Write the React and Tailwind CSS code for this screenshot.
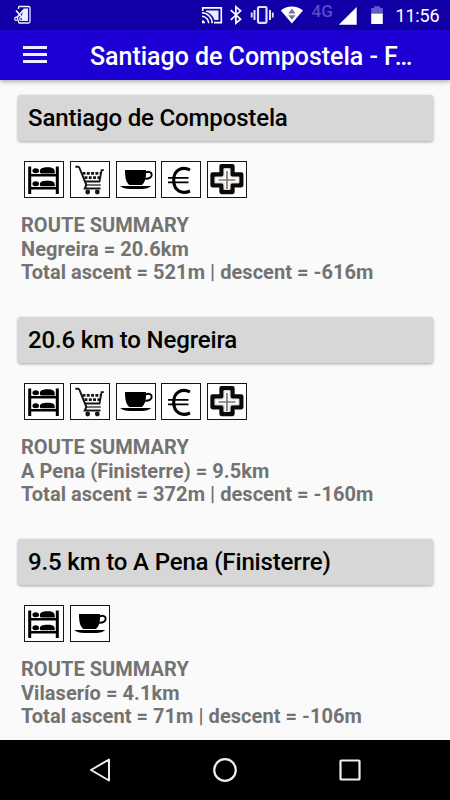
const STAGES = [
  {
    title: "Santiago de Compostela",
    services: ["bed", "shop", "cafe", "bank", "pharmacy"],
    next: "Negreira = 20.6km",
    totals: "Total ascent = 521m | descent = -616m",
  },
  {
    title: "20.6 km to Negreira",
    services: ["bed", "shop", "cafe", "bank", "pharmacy"],
    next: "A Pena (Finisterre) = 9.5km",
    totals: "Total ascent = 372m | descent = -160m",
  },
  {
    title: "9.5 km to A Pena (Finisterre)",
    services: ["bed", "cafe"],
    next: "Vilaserío = 4.1km",
    totals: "Total ascent = 71m | descent = -106m",
  },
];

// Service pictograms, all drawn in a 40x37 box
const ICONS = {
  bed: (
    <g fill="#000">
      <path d="M4.2 5.5h3V33h-3zM31.8 5.5h3V33h-3zM6 13h28v2.5H6zM6 26h28v2.6H6z" />
      <ellipse cx="11.700" cy="9.800" rx="3.300" ry="2.500" />
      <ellipse cx="11.700" cy="22.800" rx="3.300" ry="2.500" />
      <path d="M15.800 10.500c0-2.700 1.500-3.800 4.500-4.100 2.500-.3 5.500-.3 7.500.3 2.500.6 3 2.300 3 5.800h-13.500c-1 0-1.500-.7-1.500-2zM15.800 23.500c0-2.500 1.500-3.300 4.500-3.600 2.500-.3 5.500-.3 7.500.3 2.500.6 3 1.800 3 5.100h-13.500c-1 0-1.500-.7-1.500-1.800z" />
    </g>
  ),
  shop: (
    <g fill="none" stroke="#161616" strokeWidth="1.800">
      <path d="M5.300 5.700h2.500q1.200 0 1.700 1.300l6.800 16.800-1.500 3.700h15.700" strokeWidth="2" />
      <path d="M33.800 9.200h-2.200L29.500 20.500H15" />
      <path d="M12.500 12.300h18.500M14.500 16.700h15.500" strokeWidth="2.700" strokeDasharray="2.900 1.400" />
      <path d="M16.300 24h14.500" strokeWidth="1.200" />
      <circle cx="17.700" cy="31" r="1.500" fill="#161616" />
      <circle cx="27.300" cy="31" r="1.500" fill="#161616" />
    </g>
  ),
  cafe: (
    <g fill="#000">
      <path d="M9 9h21v4c0 5-1.500 8.500-4 11H13.500C10.500 22 9 18 9 9z" />
      <path d="M29.500 11.500c3.500-1.500 6.200-.5 6.200 2.200s-3 4.300-6.500 4" fill="none" stroke="#000" strokeWidth="1.900" />
      <path d="M4.300 25h31c-2 2.100-6 2.900-9 2.900H14c-4 0-8-.8-9.700-2.900z" />
    </g>
  ),
  bank: (
    <g fill="none" stroke="#000">
      <path d="M29 8.800c-7.500-3.300-16.300-.8-16.300 10.500S21.500 33.300 29 30" strokeWidth="3.100" />
      <path d="M7 16.800h20.500M7 21.300h20.500" strokeWidth="1.800" />
    </g>
  ),
  pharmacy: (
    <g fill="none">
      <path d="M14.500 5.200h11v8.300H34.300v10.800h-8.800v6.700h-11v-6.700H5.500V13.500h9z" stroke="#0a0a0a" strokeWidth="4.300" strokeLinejoin="round" />
      <path d="M17.200 8h5.600v8.200h9v5.500h-9v6.600h-5.600v-6.600H8.200v-5.500h9z" stroke="#dedcda" strokeWidth="1" />
      <path d="M20 10v18M11.500 19h17" stroke="#81766f" strokeWidth="1.700" />
    </g>
  ),
};

const ServiceIcon = ({ name }) => (
  <svg viewBox="0 0 40 37" className="h-[37px] w-10 shrink-0 bg-white">
    <rect x="0.500" y="0.500" width="39" height="36" fill="none" stroke="#151515" />
    {ICONS[name]}
  </svg>
);

const StatusBar = () => (
  <header className="h-[30px] shrink-0 bg-[#1000a6] text-white">
    <svg viewBox="0 0 450 30" className="h-[30px] w-[450px]">
      {/* screenshot notification */}
      <g fill="none" stroke="#eef" strokeWidth="1.300">
        <path d="M18.500 9V7.500q0-1 1-1h9q1.500 0 1.500 1.500v13.500q0 1.500-1.500 1.500h-9q-1 0-1-1V20" />
        <path d="M23.500 8.500h4.500v12.500h-5.500l-1-4z" fill="#eef" stroke="none" />
        <path d="M16 10.500l7 8M23.500 10l-7 8" strokeWidth="1.700" />
        <circle cx="16.300" cy="18.700" r="1.600" />
        <circle cx="21.300" cy="18.700" r="1.600" />
      </g>
      {/* cast */}
      <g fill="none" stroke="#fff" strokeWidth="1.600">
        <path d="M202.700 11V7.900h18.600v14.700H214" />
        <path d="M202 12.800a10.500 10.500 0 0 1 10.200 10.500M202 16.300a7 7 0 0 1 6.700 7" />
        <path d="M202 20.200a3 3 0 0 1 3 3h-3z" fill="#fff" stroke="none" />
        <path d="M206 10.500h12.500v9.500H214.500c-1.300-4-4-7-8.500-8.300z" fill="#ececff" stroke="none" />
      </g>
      {/* bluetooth */}
      <path d="M230.800 10.200l9.800 9-4.700 4V6.800l4.700 4-9.800 9" fill="none" stroke="#fff" strokeWidth="1.700" />
      {/* vibrate */}
      <g fill="none" stroke="#e1e0fa">
        <rect x="258" y="7" width="8.500" height="15.800" rx="1" strokeWidth="2.200" />
        <path d="M254.500 10v10M270 10v10" strokeWidth="2" />
        <path d="M251.700 12.500v5M272.800 12.500v5" strokeWidth="1.800" />
      </g>
      {/* wifi */}
      <path d="M280.800 10.500c6-5.500 16-5.500 22.200 0L291.900 23.500z" fill="#fff" />
      <path d="M288.200 13.500l3.700-5 3.700 5zM288.200 15.300h7.400l-3.700 4.500z" fill="#77749b" />
      <text x="311.500" y="16.500" className="fill-[#594dc9] font-['Roboto',sans-serif] text-[17px] font-medium">4G</text>
      <path d="M338.800 24.800L356.700 7v17.800z" fill="#fff" />
      {/* battery */}
      <path d="M374 6.300h6v1.700h2.800v5.500h-11.600V8h2.800z" fill="#6259cb" />
      <path d="M371.200 13.500h11.600V24h-11.600z" fill="#fff" />
      <text x="395.500" y="22" textLength="44" className="fill-white font-['Roboto',sans-serif] text-[18px]">11:56</text>
    </svg>
  </header>
);

const AppBar = () => (
  <div className="z-10 flex h-[50px] shrink-0 items-center bg-[#1d00d4] pl-[23px] text-white shadow-[0_1px_5px_rgba(0,0,0,0.4)]">
    <div className="flex w-6 -translate-y-px flex-col gap-[4px]">
      <span className="h-[3px] bg-[#f0efff]" />
      <span className="h-[3px] bg-[#f0efff]" />
      <span className="h-[3px] bg-[#f0efff]" />
    </div>
    <h1 className="ml-[43px] mt-[3px] text-[25px] font-medium tracking-[-0.03px] whitespace-nowrap">
      Santiago de Compostela - F…
    </h1>
  </div>
);

const StageCard = ({ stage }) => (
  <section className="h-[222px] shrink-0 px-[18px]">
    <h2 className="flex h-[46px] w-[415px] items-center rounded-[3px] bg-[#d7d7d7] pl-[10px] text-[24px] font-medium tracking-[-0.15px] text-black shadow-[0_1px_3px_rgba(0,0,0,0.35)]">
      {stage.title}
    </h2>
    <div className="mt-5 flex gap-[5.8px] pl-[6px]">
      {stage.services.map((name) => (
        <ServiceIcon key={name} name={name} />
      ))}
    </div>
    <div className="mt-4 pl-[3px] text-[20px] leading-[23.700px] font-bold tracking-[0.05px] whitespace-nowrap text-[#737373]">
      <p>ROUTE SUMMARY</p>
      <p>{stage.next}</p>
      <p>{stage.totals}</p>
    </div>
  </section>
);

const NavBar = () => (
  <nav className="flex h-[60px] shrink-0 items-center justify-between bg-black px-[88px]">
    <svg viewBox="0 0 24 24" className="size-6" fill="none" stroke="#eee" strokeWidth="2" strokeLinejoin="round">
      <path d="M21 1.500v21L3 12z" />
    </svg>
    <svg viewBox="0 0 24 24" className="size-6" fill="none" stroke="#eee" strokeWidth="2.200">
      <circle cx="12" cy="12" r="10.800" />
    </svg>
    <svg viewBox="0 0 24 24" className="size-6" fill="none" stroke="#eee" strokeWidth="2.200">
      <rect x="2.500" y="2.500" width="19" height="19" rx="0.800" />
    </svg>
  </nav>
);

export default function App() {
  return (
    <div className="flex h-[800px] w-[450px] flex-col overflow-hidden bg-[#fafafa] font-['Roboto',sans-serif]">
      <StatusBar />
      <AppBar />
      <main className="flex min-h-0 flex-1 flex-col overflow-hidden pt-[15px]">
        {STAGES.map((stage) => (
          <StageCard key={stage.title} stage={stage} />
        ))}
      </main>
      <NavBar />
    </div>
  );
}
